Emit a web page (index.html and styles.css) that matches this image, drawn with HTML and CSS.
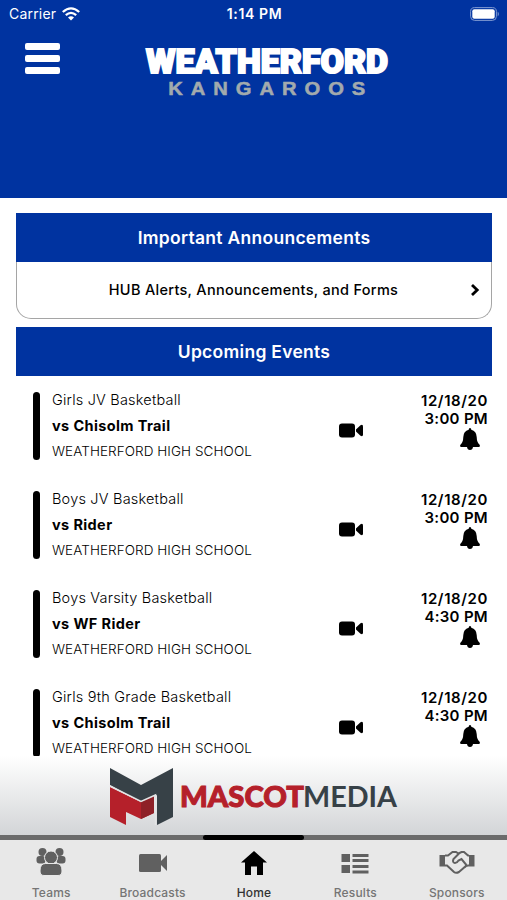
FILE: index.html
```
<!DOCTYPE html>
<html lang="en">
<head>
    <meta charset="UTF-8">
    <title>Weatherford Kangaroos</title>
    <link rel="stylesheet" href="styles.css">
</head>
<body>
    <!-- shared icons -->
    <svg class="defs">
        <symbol id="camera" viewBox="0 0 24 15">
            <rect x="0" y="0.5" width="16" height="14" rx="3"/>
            <path d="M17 6.5L21.5 2.3Q24 1 24 3.5V11.5Q24 14 21.5 12.7L17 8.5Z"/>
        </symbol>
        <symbol id="bell" viewBox="0 0 22 22">
            <path d="M11 0Q12.3 0 12.3 1.7Q17.5 3 17.7 9Q17.8 14.5 20.8 17Q21.5 19 19.8 19H14Q13.6 22 11 22Q8.4 22 8 19H2.2Q.5 19 1.2 17Q4.2 14.5 4.3 9Q4.5 3 9.7 1.7Q9.7 0 11 0Z"/>
        </symbol>
    </svg>

    <header class="header">
        <div class="status">
            <div class="carrier">
                <span>Carrier</span>
                <svg width="18" height="14" viewBox="0 0 18 14" fill="none" stroke="#fff" stroke-width="2.3">
                    <path d="M.8 5Q9-2.3 17.2 5M3.8 8.1Q9 3.6 14.2 8.1"/>
                    <path d="M6 10.4Q9 8 12 10.4L9 13.6Z" fill="#fff" stroke="none"/>
                </svg>
            </div>
            <span class="time">1:14 PM</span>
            <svg class="battery" width="30" height="14" viewBox="0 0 30 14">
                <rect x=".6" y=".6" width="25.8" height="12.8" rx="4" fill="none" stroke="#7f9ad2"/>
                <rect x="2.3" y="2.3" width="22.4" height="9.4" rx="2" fill="#fff"/>
                <path d="M27.7 4.5Q30 7 27.7 9.5Z" fill="#7f9ad2"/>
            </svg>
        </div>
        <div class="brand">
            <div class="menu"><i></i><i></i><i></i></div>
            <svg class="logo" width="246" height="54" viewBox="0 0 246 54">
                <text class="logo-name" x="3" y="29.5" textLength="242" lengthAdjust="spacingAndGlyphs">WEATHERFORD</text>
                <text class="logo-team" transform="scale(1.12 1)" x="22.5" y="52" textLength="176">KANGAROOS</text>
            </svg>
        </div>
    </header>

    <main class="content">
        <h2 class="bar">Important Announcements</h2>
        <div class="notice">
            <span>HUB Alerts, Announcements, and Forms</span>
            <svg width="10" height="14" viewBox="0 0 10 14" fill="none" stroke="#000" stroke-width="2.8"><path d="M2 2L7.2 7L2 12"/></svg>
        </div>
        <h2 class="bar">Upcoming Events</h2>

        <div class="event">
            <div class="info">
                <p class="sport">Girls JV Basketball</p>
                <p class="opponent">vs Chisolm Trail</p>
                <p class="place">WEATHERFORD HIGH SCHOOL</p>
            </div>
            <svg class="camera"><use href="#camera"/></svg>
            <div class="when">
                <span class="date">12/18/20</span>
                <span>3:00 PM</span>
                <svg class="bell"><use href="#bell"/></svg>
            </div>
        </div>
        <div class="event">
            <div class="info">
                <p class="sport">Boys JV Basketball</p>
                <p class="opponent">vs Rider</p>
                <p class="place">WEATHERFORD HIGH SCHOOL</p>
            </div>
            <svg class="camera"><use href="#camera"/></svg>
            <div class="when">
                <span class="date">12/18/20</span>
                <span>3:00 PM</span>
                <svg class="bell"><use href="#bell"/></svg>
            </div>
        </div>
        <div class="event">
            <div class="info">
                <p class="sport">Boys Varsity Basketball</p>
                <p class="opponent">vs WF Rider</p>
                <p class="place">WEATHERFORD HIGH SCHOOL</p>
            </div>
            <svg class="camera"><use href="#camera"/></svg>
            <div class="when">
                <span class="date">12/18/20</span>
                <span>4:30 PM</span>
                <svg class="bell"><use href="#bell"/></svg>
            </div>
        </div>
        <div class="event">
            <div class="info">
                <p class="sport">Girls 9th Grade Basketball</p>
                <p class="opponent">vs Chisolm Trail</p>
                <p class="place">WEATHERFORD HIGH SCHOOL</p>
            </div>
            <svg class="camera"><use href="#camera"/></svg>
            <div class="when">
                <span class="date">12/18/20</span>
                <span>4:30 PM</span>
                <svg class="bell"><use href="#bell"/></svg>
            </div>
        </div>
    </main>

    <div class="sponsor">
        <svg width="290" height="60" viewBox="0 0 290 60">
            <path fill="#374147" d="M1 1L32 18L64 1V50L48 58V28L32 35L1 18Z"/>
            <path fill="#b5202a" d="M1 20L32 35L45 29V46L32 52L17 45V58L1 50Z"/>
            <path fill="#8e2027" d="M32 35L45 29V46L32 52Z"/>
            <path fill="none" stroke="#e3e4e5" stroke-width="1.5" d="M1 19L32 34.5L46.500 28V58"/>
            <text class="mascot" x="71" y="39.5" textLength="124" lengthAdjust="spacingAndGlyphs">MASCOT</text>
            <text class="media" x="194" y="39.5" textLength="94" lengthAdjust="spacingAndGlyphs">MEDIA</text>
        </svg>
    </div>

    <nav class="tabs">
        <a class="tab">
            <svg width="30" height="30" viewBox="0 0 30 30">
                <circle cx="6.5" cy="5" r="4"/><circle cx="23.5" cy="5" r="4"/>
                <rect x=".5" y="9" width="9" height="7.5" rx="3"/><rect x="20.5" y="9" width="9" height="7.5" rx="3"/>
                <circle class="gap" cx="15" cy="10.500" r="6.500"/>
                <path class="gap" d="M4 24Q4 16.500 9.500 16.500H20.500Q26 16.500 26 24Q26 28.500 22 28.500H8Q4 28.500 4 24Z"/>
            </svg>
            <span>Teams</span>
        </a>
        <a class="tab">
            <svg width="30" height="30" viewBox="0 0 30 30">
                <rect x="1" y="7" width="22" height="18" rx="1.5"/><path d="M23 14L29 8V24L23 18Z"/>
            </svg>
            <span>Broadcasts</span>
        </a>
        <a class="tab active">
            <svg width="30" height="30" viewBox="0 0 30 30">
                <path d="M15 4L28 15.5H24V28H18V19.5H12V28H6V15.5H2Z"/>
            </svg>
            <span>Home</span>
        </a>
        <a class="tab">
            <svg width="30" height="30" viewBox="0 0 30 30">
                <path d="M1.5 7H10V15H1.5ZM1.5 18H10V26H1.5ZM12.5 7H28.5V10H12.5ZM12.5 12H28.5V15H12.5ZM12.5 18H28.5V21H12.5ZM12.5 23.5H28.5V26.5H12.5Z"/>
            </svg>
            <span>Results</span>
        </a>
        <a class="tab">
            <svg width="36" height="30" viewBox="0 0 36 30">
                <path d="M.5 8H6V19.5H.5ZM30 8H35.5V19.5H30Z"/>
                <path class="line" d="M6 8.5H9L13.5 5H17L19.5 6.5L22.5 5H25L29 8.5H30M6 18.5H8L15 25Q17 26.5 20 25L27 19L29 18.5H30M20 6.5L14.5 12Q13 15.5 16 16Q18 16 19.5 13.5L22.5 12L27 17.5Q27.5 19.5 25 20.5"/>
            </svg>
            <span>Sponsors</span>
        </a>
    </nav>
</body>
</html>
```

FILE: styles.css
```
* {
    box-sizing: border-box;
}
body {
    font-family: Inter, sans-serif;
    display: flex;
    flex-direction: column;
    height: 900px;
    margin: 0;
    background-color: #fff;
    color: #000;
    overflow: hidden;
}
h2, p {
    margin: 0;
}
.defs {
    display: none;
}
.header {
    height: 198px;
    flex: none;
    background-color: #0033a0;
    color: #fff;
}
.status {
    display: grid;
    grid-template-columns: 1fr auto 1fr;
    align-items: center;
    height: 27px;
    padding: 0 7px 0 9px;
    font-size: 14px;
    letter-spacing: 0.2px;
}
.carrier {
    display: flex;
    align-items: center;
    gap: 6px;
}
.time {
    font-weight: 600;
    letter-spacing: 0.6px;
}
.battery {
    justify-self: end;
}
.brand {
    display: flex;
    align-items: flex-start;
    padding: 16px 0 0 25px;
}
.menu {
    display: flex;
    flex-direction: column;
    gap: 5px;
    width: 35px;
    margin-right: 83px;
}
.menu i {
    height: 7px;
    border-radius: 2px;
    background-color: #fff;
}
.logo {
    overflow: visible;
}
.logo-name {
    font-family: Roboto, sans-serif;
    font-weight: 900;
    font-size: 34px;
    fill: #fff;
    stroke: #fff;
    stroke-width: 2px;
}
.logo-team {
    font-family: "Liberation Sans", sans-serif;
    font-weight: bold;
    font-size: 18px;
    fill: #a2aaad;
    stroke: #a2aaad;
    stroke-width: 0.5px;
}
.content {
    height: 558px;
    flex: none;
    padding: 15px 15px 0 16px;
    overflow: hidden;
}
.bar {
    height: 49px;
    line-height: 49px;
    background-color: #0033a0;
    color: #fff;
    font-size: 17.5px;
    font-weight: 600;
    letter-spacing: 0.28px;
    text-align: center;
}
.notice {
    display: flex;
    align-items: center;
    height: 57px;
    margin-bottom: 8px;
    padding: 0 11px 1px 20px;
    border: 1px solid #a5a5a5;
    border-top: none;
    border-radius: 0 0 15px 15px;
    font-size: 14.5px;
    font-weight: 500;
    letter-spacing: 0.3px;
}
.notice span {
    flex: 1;
    text-align: center;
}
.event {
    display: flex;
    height: 68px;
    margin: 0 4px 31px 17px;
}
.bar + .event {
    margin-top: 16px;
}
.info {
    width: 306px;
    position: relative;
    padding-left: 19px;
}
.info::before {
    content: "";
    position: absolute;
    left: 0;
    top: 0;
    width: 7px;
    height: 68px;
    border-radius: 4px;
    background-color: #000;
}
.sport {
    font-size: 14.5px;
    font-weight: 300;
    line-height: 15px;
    letter-spacing: 0.2px;
}
.opponent {
    margin-top: 11px;
    font-size: 14.5px;
    font-weight: 700;
    line-height: 15px;
    letter-spacing: 0.38px;
}
.place {
    margin-top: 11px;
    font-size: 13.5px;
    font-weight: 300;
    line-height: 15px;
    letter-spacing: 0.07px;
}
.camera {
    width: 24px;
    height: 15px;
    margin-top: 31px;
}
.when {
    display: flex;
    flex-direction: column;
    align-items: flex-end;
    flex: 1;
    font-size: 15px;
    font-weight: 600;
    line-height: 18px;
    letter-spacing: 0.3px;
}
.date {
    letter-spacing: 0.6px;
}
.bell {
    width: 22px;
    height: 22px;
    margin-right: 7px;
}
.sponsor {
    display: flex;
    justify-content: center;
    height: 79px;
    flex: none;
    padding-top: 11px;
    background: linear-gradient(#fff, #d3d5d7);
}
.mascot {
    font-family: Lato, sans-serif;
    font-weight: 900;
    font-size: 28px;
    fill: #b5202a;
    stroke: #b5202a;
}
.media {
    font-family: Lato, sans-serif;
    font-weight: 700;
    font-size: 28px;
    fill: #374147;
}
.tabs {
    display: grid;
    grid-template-columns: repeat(5, 1fr);
    height: 65px;
    flex: none;
    background-color: #e8e8e8;
    border-top: 5px solid #6b6b6b;
}
.tab {
    display: flex;
    flex-direction: column;
    align-items: center;
    position: relative;
    padding: 7px 0 0 1px;
    color: #757575;
    fill: #606060;
    font-size: 12px;
    font-weight: 500;
    letter-spacing: 0.15px;
}
.tab span {
    margin-top: 8px;
    line-height: 15px;
}
.tab.active {
    color: #333;
    fill: #000;
}
.tab.active::before {
    content: "";
    position: absolute;
    left: 0;
    top: -5px;
    width: 101px;
    height: 5px;
    border-radius: 3px;
    background-color: #000;
}
.gap {
    stroke: #e8e8e8;
    stroke-width: 1px;
}
.line {
    fill: none;
    stroke: #606060;
    stroke-width: 2px;
}
```
